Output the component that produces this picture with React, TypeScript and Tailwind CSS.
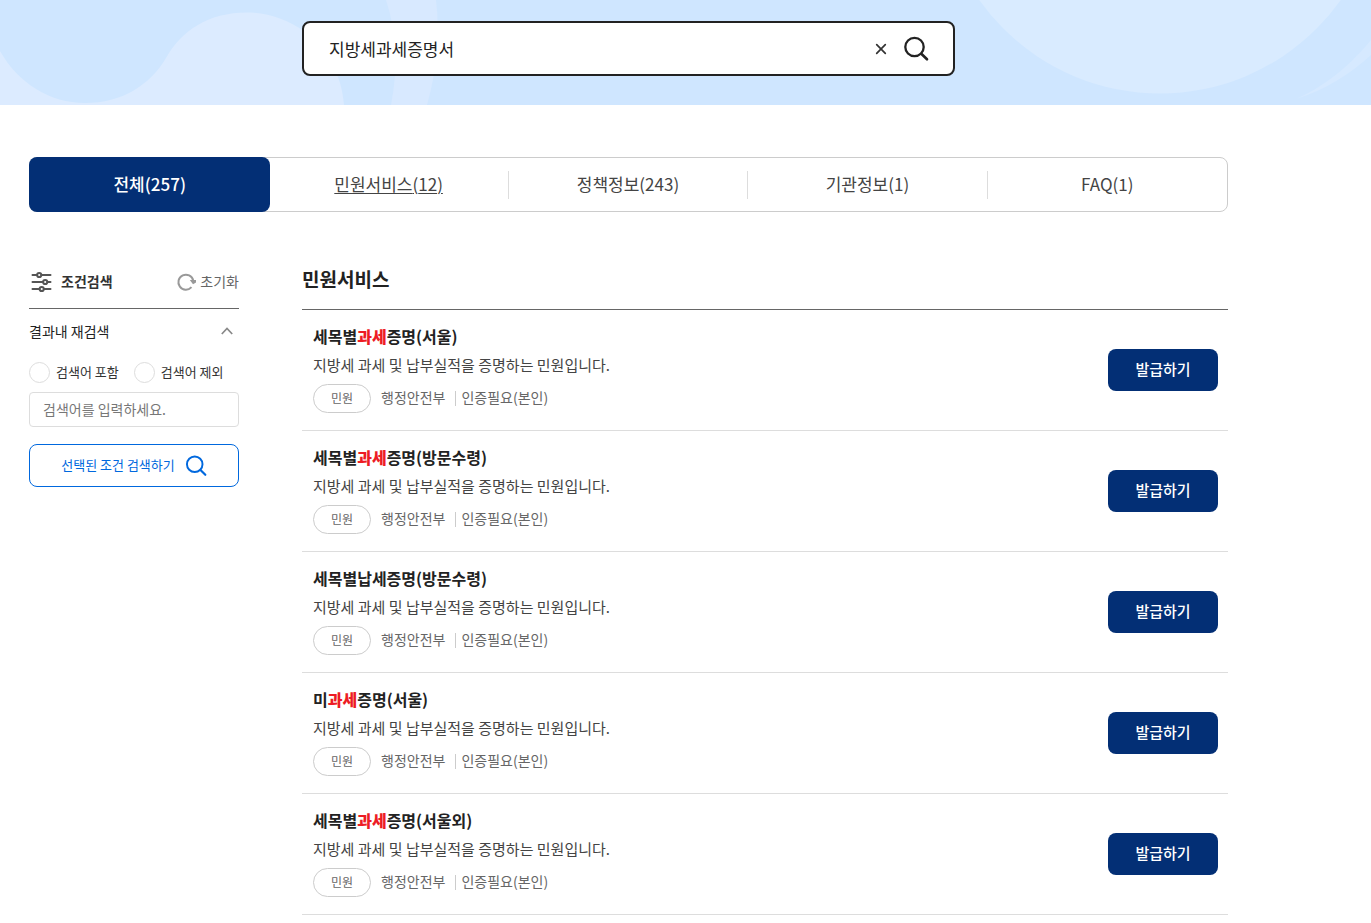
import { useState } from "react";

interface ServiceItem {
  id: number;
  title: string;
}

const KEYWORD = "과세";

const tabs = [
  { name: "전체", count: 257 },
  { name: "민원서비스", count: 12 },
  { name: "정책정보", count: 243 },
  { name: "기관정보", count: 1 },
  { name: "FAQ", count: 1 },
];

const services: ServiceItem[] = [
  { id: 1, title: "세목별과세증명(서울)" },
  { id: 2, title: "세목별과세증명(방문수령)" },
  { id: 3, title: "세목별납세증명(방문수령)" },
  { id: 4, title: "미과세증명(서울)" },
  { id: 5, title: "세목별과세증명(서울외)" },
];

const SearchIcon = ({ className }: { className: string }) => (
  <svg className={className} viewBox="0 0 26 26" fill="none" stroke="currentColor" strokeLinecap="round">
    <circle cx="11.500" cy="11" r="9.200" strokeWidth="2.300" />
    <path d="M18.300 17.800 24 23.300" strokeWidth="2.600" />
  </svg>
);

const BannerWaves = () => (
  <svg className="absolute inset-0 w-full h-full" aria-hidden="true">
    <path
      d="M0 51C18 83 50 103 85 103C122 103 150 85 166 58C181 31 208 12.500 247 12.500C268 12.500 288 20 304 31C327 49 342 75 344 105H0Z"
      fill="#dcebff"
    />
    <path d="M386 0C397 33 398 70 391 105H427C437 70 440 33 436 0Z" fill="#d8e9ff" />
    <circle cx="1160" cy="-128" r="221.500" fill="#d9ebff" />
    <path d="M1296 99C1328 85 1354 61 1371 40L1420 -30V0L1371 55C1350 74 1325 90 1296 99Z" fill="#d6e9ff" />
  </svg>
);

const SearchBanner = () => {
  const [query, setQuery] = useState("지방세과세증명서");

  return (
    <div className="relative bg-[#cfe6ff]">
      <BannerWaves />
      <div className="relative max-w-[1257px] px-7 pt-[21px] pb-[29px]">
        <form
          onSubmit={(e) => e.preventDefault()}
          className="flex items-center max-w-[653px] h-[55px] mx-auto pl-[25px] pr-6 bg-white border-2 border-[#222] rounded-lg"
        >
          <input
            type="text"
            aria-label="검색어"
            value={query}
            onChange={(e) => setQuery(e.target.value)}
            className="flex-1 min-w-0 text-[17px] text-[#222] outline-none"
          />
          <button type="button" aria-label="지우기" onClick={() => setQuery("")} className="p-1">
            <svg className="w-3 h-3" viewBox="0 0 12 12" stroke="#333" strokeWidth="1.7" strokeLinecap="round">
              <path d="M1.700 1.700 10.300 10.300M10.300 1.700 1.700 10.300" />
            </svg>
          </button>
          <button type="submit" aria-label="검색" className="ml-3 text-[#222]">
            <SearchIcon className="w-[26px] h-[26px]" />
          </button>
        </form>
      </div>
    </div>
  );
};

const ResultTabs = () => (
  <nav className="grid grid-cols-5 h-[55px] border border-[#ccc] rounded-lg">
    {tabs.map((tab, index) => (
      <a
        key={tab.name}
        href="#"
        className={`flex items-center text-[17px] ${
          index === 0 ? "-m-px bg-[#032f75] text-white font-medium rounded-lg" : "text-[#444]"
        }`}
      >
        <span
          className={`flex-1 flex items-center justify-center h-7 pb-[2px] ${
            index === 1 ? "underline underline-offset-2" : ""
          } ${index > 0 && index < tabs.length - 1 ? "border-r border-[#ddd]" : ""}`}
        >
          {tab.name}({tab.count})
        </span>
      </a>
    ))}
  </nav>
);

const FilterPanel = () => {
  const [isOpen, setIsOpen] = useState(true);

  return (
    <aside className="w-[210px] shrink-0">
      <div className="flex items-center justify-between h-[54px] pb-[2px] border-b border-[#666]">
        <h2 className="flex items-center gap-2 text-sm font-bold text-[#333]">
          <svg className="w-6 h-6" viewBox="0 0 24 24" fill="none" stroke="#555" strokeWidth="2" strokeLinecap="round">
            <path d="M3.500 6H8M12.500 6H21.500M3.500 13H14M18.500 13H21.500M3.500 20H10.500M15 20H21.500" />
            <circle cx="10.200" cy="6" r="2.100" />
            <circle cx="16.200" cy="13" r="2.100" />
            <circle cx="12.700" cy="20" r="2.100" />
          </svg>
          조건검색
        </h2>
        <button type="button" className="flex items-center gap-1 text-sm text-[#666]">
          <svg className="w-5 h-5" viewBox="0 0 20 20" fill="none" stroke="#999" strokeWidth="2">
            <path d="M15.500 16.200A7.500 7.500 0 1 1 17.200 9.500" />
            <path d="M13.800 9H20V11.500L17 13.300Z" fill="#999" stroke="none" />
          </svg>
          초기화
        </button>
      </div>
      <button
        type="button"
        aria-expanded={isOpen}
        onClick={() => setIsOpen(!isOpen)}
        className="flex items-center justify-between w-full h-11 pr-[6px] text-sm text-[#222]"
      >
        결과내 재검색
        <svg className={`w-3 h-3 ${isOpen ? "" : "rotate-180"}`} viewBox="0 0 12 12" fill="none" stroke="#888" strokeWidth="1.7">
          <path d="M.8 9 6 3.500 11.200 9" />
        </svg>
      </button>
      {isOpen && (
        <div>
          <div className="flex gap-[15px] h-[39px] items-center text-[13px] text-[#333]">
            <label className="flex items-center gap-[6px]">
              <input type="radio" name="scope" className="appearance-none w-[21px] h-[21px] border border-[#ddd] rounded-full checked:border-[6px] checked:border-[#0068de]" />
              <span className="pb-[2px]">검색어 포함</span>
            </label>
            <label className="flex items-center gap-[6px]">
              <input type="radio" name="scope" className="appearance-none w-[21px] h-[21px] border border-[#ddd] rounded-full checked:border-[6px] checked:border-[#0068de]" />
              <span className="pb-[2px]">검색어 제외</span>
            </label>
          </div>
          <input
            type="text"
            aria-label="결과내 검색어"
            placeholder="검색어를 입력하세요."
            className="block w-full h-[35px] px-[13px] pb-[2px] text-sm border border-[#ddd] rounded placeholder:text-[#777]"
          />
        </div>
      )}
      <button
        type="button"
        className="flex items-center justify-center gap-[10px] w-full h-[43px] mt-[17px] text-[13px] text-[#0068de] border border-[#0068de] rounded-lg"
      >
        <span className="pb-[2px]">선택된 조건 검색하기</span>
        <SearchIcon className="w-[22px] h-[22px]" />
      </button>
    </aside>
  );
};

const ServiceRow = ({ title }: { title: string }) => (
  <li className="flex items-center justify-between pl-[11px] pr-[10px] pt-3 pb-[17px] border-b border-[#ddd]">
    <div>
      <h3 className="text-base leading-7 font-bold text-[#222]">
        <a href="#">
          {title.split(KEYWORD).map((part, index) => (
            <span key={index}>
              {index > 0 && <strong className="text-[#ed1c24]">{KEYWORD}</strong>}
              {part}
            </span>
          ))}
        </a>
      </h3>
      <p className="pt-px text-[15px] leading-7 text-[#444]">지방세 과세 및 납부실적을 증명하는 민원입니다.</p>
      <div className="flex items-center mt-[5px] text-sm text-[#666]">
        <span className="flex items-center justify-center w-[58px] h-[29px] pb-[2px] text-xs border border-[#ccc] rounded-full">
          민원
        </span>
        <span className="ml-[10px] pb-[3px] leading-5">행정안전부</span>
        <span className="w-px h-[15px] ml-[10px] mr-[5px] bg-[#ccc]" />
        <span className="pb-[3px] leading-5">인증필요(본인)</span>
      </div>
    </div>
    <button
      type="button"
      className="w-[110px] h-[42px] mt-[5px] pb-[2px] text-[15px] font-medium text-white bg-[#032f75] rounded-lg"
    >
      발급하기
    </button>
  </li>
);

const App = () => {
  return (
    <div className="min-h-screen bg-white font-['Noto_Sans_CJK_KR',sans-serif]">
      <SearchBanner />
      <main className="max-w-[1257px] px-[29px] pt-[52px]">
        <ResultTabs />
        <div className="flex gap-[63px] pt-[43px]">
          <FilterPanel />
          <section className="flex-1 min-w-0">
            <h2 className="flex items-center h-[55px] pb-[5px] text-[19px] font-bold text-[#222] border-b border-[#666]">
              민원서비스
            </h2>
            <ul>
              {services.map((item) => (
                <ServiceRow key={item.id} title={item.title} />
              ))}
            </ul>
          </section>
        </div>
      </main>
    </div>
  );
};

export default App;
